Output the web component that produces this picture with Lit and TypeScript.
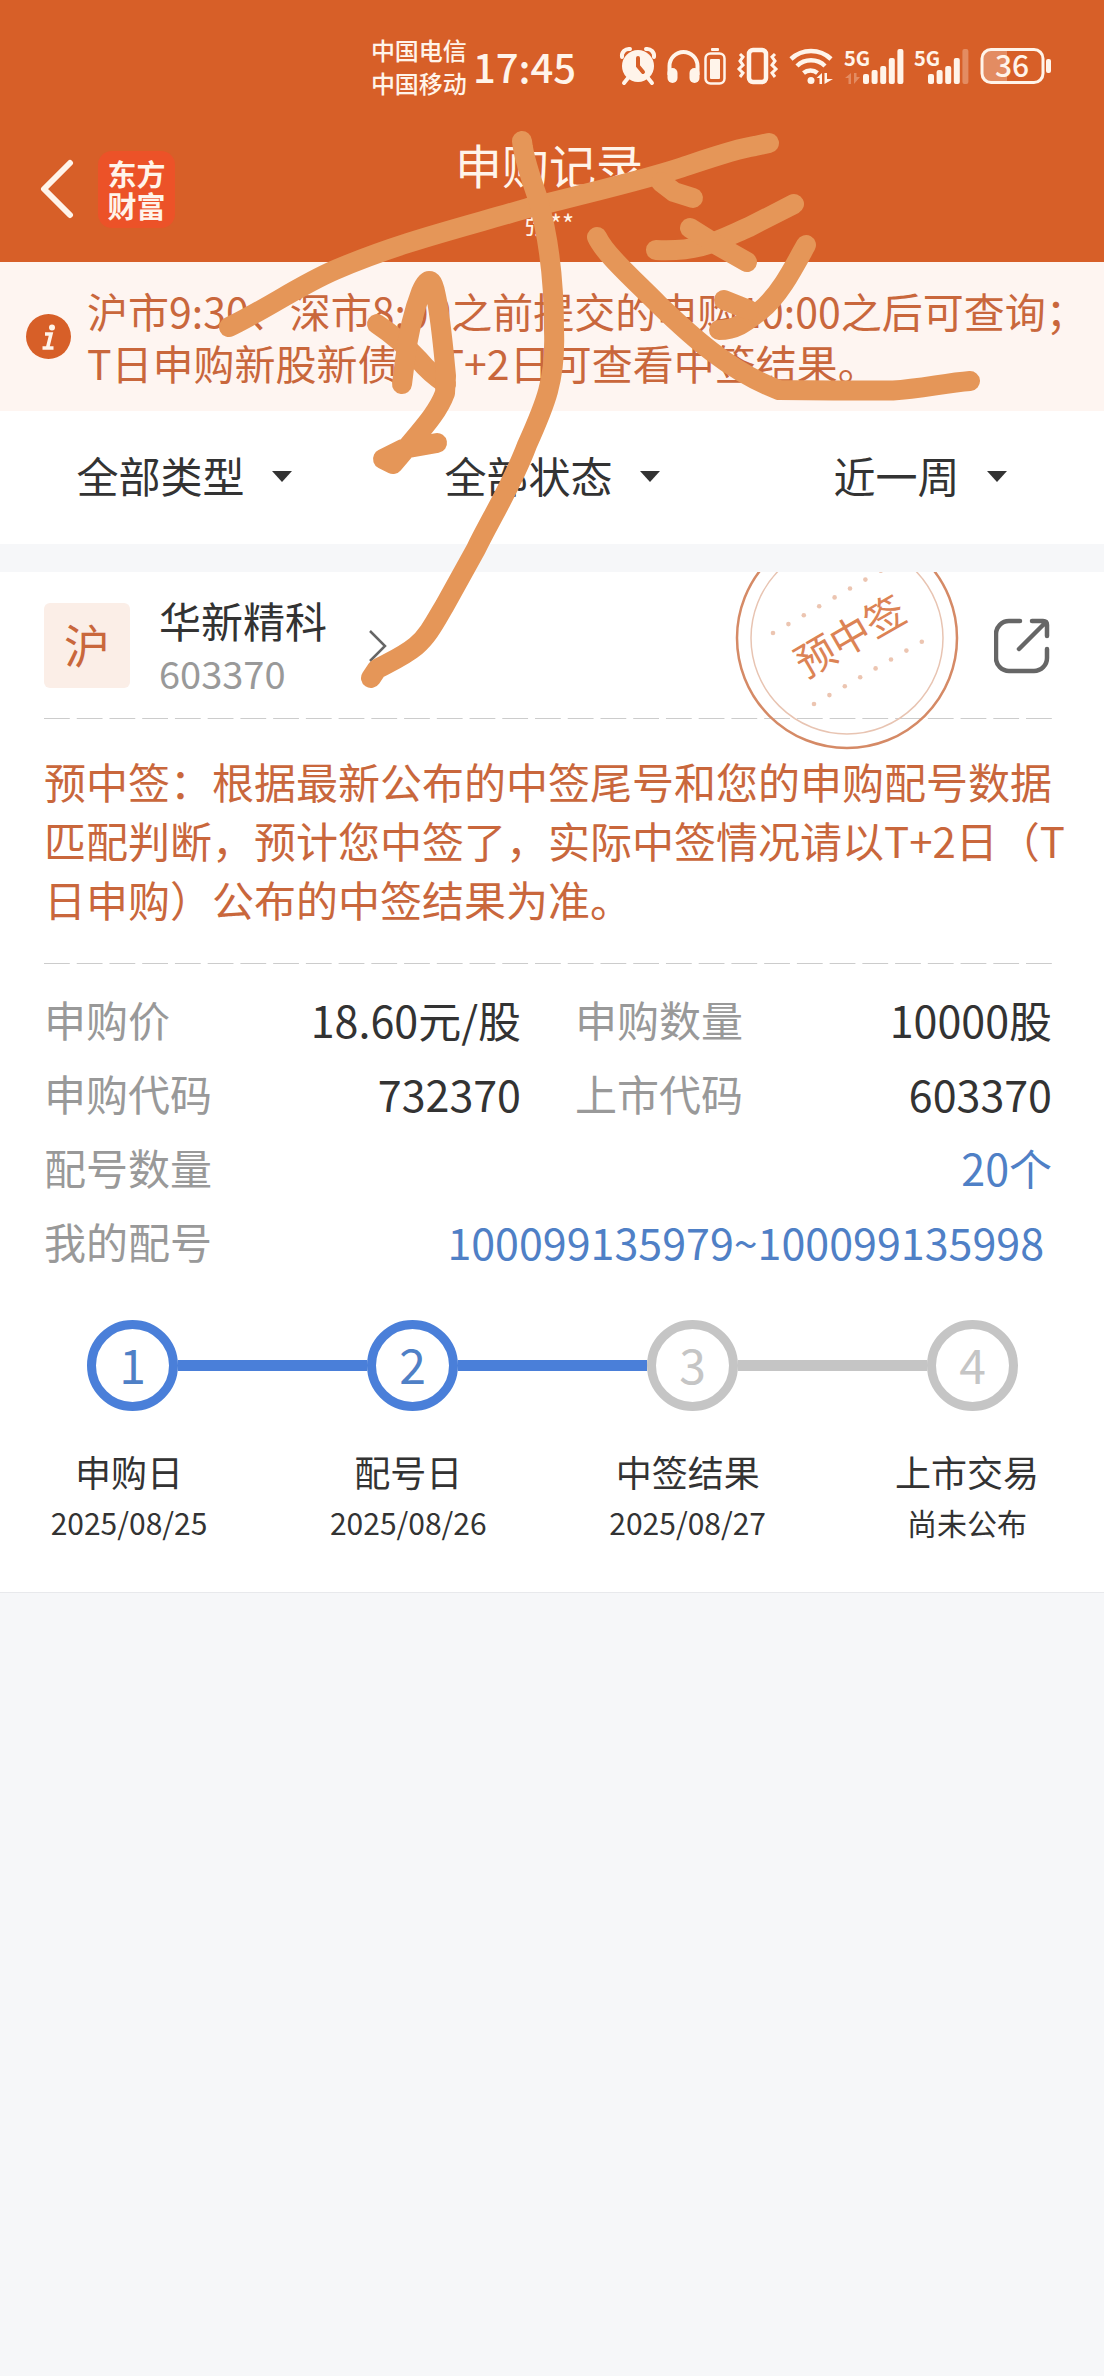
import { LitElement, html, css, svg } from "lit";
import { customElement, property } from "lit/decorators.js";
import { classMap } from "lit/directives/class-map.js";

interface Step {
  label: string;
  date: string;
  done: boolean;
}

interface Field {
  label: string;
  value: string;
  link?: boolean;
  wide?: boolean;
  inset?: boolean;
}

@customElement("status-bar")
export class StatusBar extends LitElement {
  static styles = css`
    :host {
      display: flex;
      align-items: center;
      justify-content: flex-end;
      padding: 33px 52px 0 0;
      color: #fff4ea;
      font-weight: 500;
    }
    .carriers {
      display: grid;
      font-size: 24px;
      line-height: 33px;
    }
    .time {
      margin: 0 44px 0 6px;
      font-size: 40px;
      line-height: 66px;
    }
    .icons {
      display: flex;
      gap: 11px;
      align-items: center;
    }
    .icons svg {
      display: block;
      height: 40px;
      overflow: visible;
      fill: currentColor;
    }
    .pair {
      display: flex;
      gap: 4px;
    }
    .net {
      font-size: 20px;
      font-weight: 700;
    }
    .level {
      font-size: 30px;
      font-weight: 500;
    }
    .faint {
      opacity: 0.3;
    }
  `;

  private bars(heights: number[], start: number, weak: number) {
    return heights.map(
      (h, i) => svg`<rect class=${i >= weak ? "faint" : ""} x=${start + i * 8.6} y=${38 - h} width="6" height=${h} rx="2"/>`,
    );
  }

  render() {
    return html`
      <div class="carriers"><span>中国电信</span><span>中国移动</span></div>
      <div class="time">17:45</div>
      <div class="icons">
        <svg width="36" viewBox="0 0 36 40" aria-hidden="true">
          <circle cx="18" cy="20" r="16" />
          <path d="M2 11a7 7 0 0 1 8-8M34 11a7 7 0 0 0-8-8" fill="none" stroke="currentColor" stroke-width="4" stroke-linecap="round" />
          <path d="M8 32l-4 5M28 32l4 5" stroke="currentColor" stroke-width="4" stroke-linecap="round" />
          <path d="M18 12v8l5 6" fill="none" stroke="#d75f28" stroke-width="4" stroke-linecap="round" />
        </svg>
        <div class="pair">
          <svg width="33" viewBox="0 0 33 40" aria-hidden="true">
            <path d="M2.500 29V20a14 14 0 0 1 28 0v9" fill="none" stroke="currentColor" stroke-width="4" />
            <rect x="0.500" y="22" width="10" height="15" rx="5" />
            <rect x="22.500" y="22" width="10" height="15" rx="5" />
          </svg>
          <svg width="22" viewBox="0 0 22 40" aria-hidden="true">
            <rect x="7" y="2" width="8" height="3" rx="1" />
            <rect x="1.500" y="7.500" width="19" height="30" rx="5" fill="none" stroke="currentColor" stroke-width="2.500" />
            <rect x="6" y="13" width="10" height="20" rx="1" />
          </svg>
        </div>
        <svg width="41" viewBox="0 0 41 40" aria-hidden="true">
          <rect x="12" y="4" width="17" height="32" rx="4" fill="none" stroke="currentColor" stroke-width="4.500" />
          <path d="M3 10l3 3-3 4 3 4-4 4 4 4-3 4M38 10l-3 3 3 4-3 4 4 4-4 4 3 4" transform="translate(0 -2)" fill="none" stroke="currentColor" stroke-width="3" />
        </svg>
        <svg width="45" viewBox="0 0 45 40" aria-hidden="true">
          <path d="M2 13a29 29 0 0 1 40 0M8 20a20 20 0 0 1 28 0M14.500 27a11 11 0 0 1 14 0" fill="none" stroke="currentColor" stroke-width="4.500" />
          <circle cx="22" cy="34.500" r="3.500" />
          <path d="M33 27v11h-2.500v-6h-3zM35.500 38V27h2.500v6h6z" />
        </svg>
        <svg width="59" viewBox="0 0 59 40" aria-hidden="true">
          <text class="net" x="-1" y="20">5G</text>
          <path class="faint" d="M6 27v11H3.500v-6H0zM9 38V27h2.500v4H15z" />
          ${this.bars([10, 14, 18, 26, 35], 18, 5)}
        </svg>
        <svg width="54" viewBox="0 0 54 40" aria-hidden="true">
          <text class="net" x="-1" y="20">5G</text>
          ${this.bars([10, 14, 18, 26, 35], 13, 4)}
        </svg>
        <svg width="72" viewBox="0 0 72 40" role="img" aria-label="36">
          <path class="faint" d="M10 4h17v32H10a7 7 0 0 1-7-7V11a7 7 0 0 1 7-7z" />
          <rect x="2" y="3.500" width="61" height="33" rx="9" fill="none" stroke="currentColor" stroke-width="3" />
          <rect x="66" y="13" width="5" height="14" rx="2" />
          <text class="level" x="32" y="31" text-anchor="middle">36</text>
        </svg>
      </div>
    `;
  }
}

@customElement("page-header")
export class PageHeader extends LitElement {
  static styles = css`
    :host {
      display: grid;
      grid-template-columns: 1fr auto 1fr;
      align-items: center;
      padding: 31px 44px 14px 38px;
      color: #fff4ea;
    }
    .start {
      display: flex;
      align-items: center;
      gap: 22px;
    }
    .back {
      padding: 0;
      border: 0;
      background: none;
      color: inherit;
    }
    .back svg {
      display: block;
    }
    .logo {
      display: grid;
      place-content: center;
      width: 77px;
      height: 77px;
      border-radius: 14px;
      background: #ec5228;
      font-size: 29px;
      font-weight: 700;
      line-height: 32px;
      text-align: center;
    }
    .heading {
      text-align: center;
    }
    .title {
      margin: 0;
      font-size: 47px;
      font-weight: 400;
      line-height: 68px;
    }
    .user {
      margin: 0;
      font-size: 26px;
      line-height: 50px;
    }
  `;

  render() {
    return html`
      <div class="start">
        <button class="back" aria-label="返回">
          <svg width="38" height="60" viewBox="0 0 38 60" fill="none" stroke="currentColor" stroke-width="6" stroke-linecap="round" stroke-linejoin="round">
            <path d="M32 4L6 30l26 26" />
          </svg>
        </button>
        <div class="logo"><span>东方</span><span>财富</span></div>
      </div>
      <div class="heading">
        <h1 class="title">申购记录</h1>
        <p class="user">张**</p>
      </div>
    `;
  }
}

@customElement("progress-steps")
export class ProgressSteps extends LitElement {
  @property({ attribute: false }) steps: Step[] = [];

  static styles = css`
    :host {
      display: block;
      color: #333;
    }
    .track {
      display: flex;
      align-items: center;
      padding: 0 34px 0 43px;
    }
    .dot {
      box-sizing: border-box;
      flex: none;
      display: grid;
      place-content: center;
      width: 91px;
      height: 91px;
      padding-bottom: 4px;
      border: 9px solid #c5c5c5;
      border-radius: 50%;
      color: #c5c5c5;
      font-size: 48px;
      line-height: 69px;
    }
    .link {
      flex: 1;
      height: 11px;
      background: #c5c5c5;
    }
    .dot.done {
      border-color: #4a7fd9;
      color: #4f80c6;
    }
    .link.done {
      background: #4a7fd9;
    }
    .names {
      display: flex;
      justify-content: space-between;
      margin: 34px 0 0;
      padding: 0;
      list-style: none;
      text-align: center;
    }
    .name {
      width: 170px;
    }
    .label {
      display: block;
      font-size: 36px;
      line-height: 52px;
    }
    .date {
      display: block;
      font-size: 30px;
      line-height: 50px;
    }
  `;

  render() {
    return html`
      <div class="track">
        ${this.steps.map(
          (s, i) => html`
            ${i > 0 ? html`<span class=${classMap({ link: true, done: this.steps[i - 1].done })}></span>` : ""}
            <span class=${classMap({ dot: true, done: s.done })}>${i + 1}</span>
          `,
        )}
      </div>
      <ol class="names">
        ${this.steps.map(
          (s) => html`<li class="name"><span class="label">${s.label}</span><span class="date">${s.date}</span></li>`,
        )}
      </ol>
    `;
  }
}

@customElement("record-card")
export class RecordCard extends LitElement {
  private fields: Field[] = [
    { label: "申购价", value: "18.60元/股" },
    { label: "申购数量", value: "10000股" },
    { label: "申购代码", value: "732370" },
    { label: "上市代码", value: "603370" },
    { label: "配号数量", value: "20个", link: true, wide: true },
    { label: "我的配号", value: "100099135979~100099135998", link: true, wide: true, inset: true },
  ];

  private steps: Step[] = [
    { label: "申购日", date: "2025/08/25", done: true },
    { label: "配号日", date: "2025/08/26", done: true },
    { label: "中签结果", date: "2025/08/27", done: false },
    { label: "上市交易", date: "尚未公布", done: false },
  ];

  static styles = css`
    :host {
      position: relative;
      display: block;
      padding: 31px 52px 45px 44px;
      border-bottom: 1px solid #e8e9ec;
      background: #fff;
      color: #333;
      overflow: hidden;
    }
    .top {
      display: flex;
      align-items: center;
      padding-bottom: 30px;
    }
    .market {
      width: 86px;
      padding-bottom: 4px;
      border-radius: 6px;
      background: #fbeee7;
      color: #c9673c;
      font-size: 46px;
      line-height: 81px;
      text-align: center;
    }
    .stock {
      display: flex;
      align-items: center;
      gap: 41px;
      margin-left: 29px;
      color: inherit;
      text-decoration: none;
    }
    .stock-name {
      display: block;
      margin-top: -12px;
      font-size: 42px;
      line-height: 54px;
    }
    .code {
      display: block;
      padding-top: 6px;
      margin-bottom: -6px;
      color: #999;
      font-size: 38px;
      line-height: 39px;
    }
    .share {
      margin-left: auto;
      padding: 0;
      border: 0;
      background: none;
    }
    .share svg,
    .stock svg {
      display: block;
    }
    .rule {
      height: 1px;
      margin: 0;
      border: 0;
      background: linear-gradient(90deg, #ccc 26px, transparent 26px) 0 0 / calc((100% + 7px) / 31) 1px;
    }
    .message {
      margin: 32px -22px 35px 0;
      color: #c9673c;
      font-size: 42px;
      line-height: 59px;
    }
    .fields {
      display: grid;
      grid-template-columns: 1fr 1fr;
      column-gap: 54px;
      margin: 18px 0 42px;
      line-height: 74px;
    }
    .field {
      display: flex;
      justify-content: space-between;
    }
    .wide {
      grid-column: 1 / -1;
    }
    .inset {
      padding-right: 8px;
    }
    .key {
      color: #999;
      font-size: 42px;
    }
    .value {
      margin: 0;
      font-size: 43px;
    }
    .value-link {
      color: #4f80c6;
      text-decoration: none;
    }
    .stamp {
      position: absolute;
      top: -46px;
      right: 145px;
      fill: none;
      pointer-events: none;
    }
    .stamp-text {
      fill: #dc8355;
      font-size: 40px;
    }
  `;

  private dots(x: number, y: number) {
    return Array.from(
      { length: 8 },
      (_, i) => svg`<circle cx=${x + i * 15.4} cy=${y - i * 8.9} r="2.3" fill="#ecc5b1"/>`,
    );
  }

  render() {
    return html`
      <div class="top">
        <span class="market">沪</span>
        <a class="stock" href="#603370">
          <span><span class="stock-name">华新精科</span><span class="code">603370</span></span>
          <svg width="20" height="34" viewBox="0 0 20 34" fill="none" stroke="#666" stroke-width="2.500"><path d="M2 2l15 15L2 32" /></svg>
        </a>
        <button class="share" aria-label="分享">
          <svg width="58" height="58" viewBox="0 0 58 58" fill="none" stroke="#666" stroke-width="4.500" stroke-linecap="round" stroke-linejoin="round">
            <path d="M26 4H15A13 13 0 0 0 2 17V41A13 13 0 0 0 15 54H40A13 13 0 0 0 53 41V32" />
            <path d="M38 4H49Q53 4 53 8V19M52 5L25 32" />
          </svg>
        </button>
      </div>
      <hr class="rule" />
      <p class="message">预中签：根据最新公布的中签尾号和您的申购配号数据匹配判断，预计您中签了，实际中签情况请以T+2日（T日申购）公布的中签结果为准。</p>
      <hr class="rule" />
      <dl class="fields">
        ${this.fields.map(
          (f) => html`
            <div class=${classMap({ field: true, wide: !!f.wide, inset: !!f.inset })}>
              <dt class="key">${f.label}</dt>
              <dd class="value">${f.link ? html`<a class="value-link" href="#allotment">${f.value}</a>` : f.value}</dd>
            </div>
          `,
        )}
      </dl>
      <progress-steps .steps=${this.steps}></progress-steps>
      <svg class="stamp" width="224" height="224" viewBox="0 0 224 224">
        <circle cx="112" cy="112" r="110" stroke="#d58a66" stroke-width="2.500" />
        <circle cx="112" cy="112" r="96" stroke="#e8c4b2" stroke-width="1.500" />
        ${this.dots(38, 107)} ${this.dots(79, 178)}
        <text class="stamp-text" x="115" y="125" text-anchor="middle" transform="rotate(-30 115 110)">预中签</text>
      </svg>
    `;
  }
}

@customElement("app-root")
export class AppRoot extends LitElement {
  private filters = [
    { name: "类型", value: "全部类型" },
    { name: "状态", value: "全部状态" },
    { name: "时间", value: "近一周" },
  ];

  static styles = css`
    :host {
      position: relative;
      display: block;
      min-height: 100vh;
      background: #f6f7f9;
      color: #333;
      font-family: "Noto Sans CJK SC", "Noto Sans", sans-serif;
    }
    .head {
      background: #d75f28;
    }
    .notice {
      display: flex;
      align-items: center;
      gap: 16px;
      padding: 22px 8px 23px 26px;
      background: #fef5f1;
      color: #c9673c;
      font-size: 41px;
      line-height: 52px;
    }
    .notice svg {
      flex: none;
    }
    .notice-text {
      margin: 0;
    }
    .filters {
      display: grid;
      grid-template-columns: repeat(3, 1fr);
      margin-bottom: 28px;
      background: #fff;
    }
    .filter {
      display: flex;
      align-items: center;
      justify-content: center;
      gap: 26px;
      padding: 33px 0 36px;
    }
    .select {
      appearance: none;
      height: 64px;
      padding: 0 0 2px;
      border: 0;
      background: none;
      color: inherit;
      font: inherit;
      font-size: 42px;
      line-height: 62px;
    }
    .ink {
      position: absolute;
      top: 0;
      left: 0;
      width: 100%;
      fill: none;
      stroke: #e59658;
      stroke-width: 20;
      stroke-linecap: round;
      stroke-linejoin: round;
      pointer-events: none;
    }
  `;

  render() {
    return html`
      <div class="head">
        <status-bar></status-bar>
        <page-header></page-header>
      </div>
      <section class="notice">
        <svg width="45" height="45" viewBox="0 0 45 45" aria-hidden="true">
          <circle cx="22.500" cy="22.500" r="22.500" fill="#d75f28" />
          <circle cx="26" cy="13.500" r="3" fill="#fff4ea" />
          <path d="M19 20h6l-3.500 14M16.500 34h11" fill="none" stroke="#fff4ea" stroke-width="3.500" />
        </svg>
        <p class="notice-text">沪市9:30、深市8:00之前提交的申购10:00之后可查询；<br />T日申购新股新债，T+2日可查看中签结果。</p>
      </section>
      <div class="filters">
        ${this.filters.map(
          (f) => html`
            <label class="filter">
              <select class="select" aria-label=${f.name}>
                <option>${f.value}</option>
              </select>
              <svg width="20" height="11" viewBox="0 0 20 11" fill="#333"><path d="M0 0h20L10 11z" /></svg>
            </label>
          `,
        )}
      </div>
      <record-card></record-card>
      <svg class="ink" viewBox="0 0 1104 720" aria-hidden="true">
        <path d="M229 327C270 307 300 285 335 270C400 242 460 228 528 208C580 195 640 181 680 168C710 158 735 149 755 146L769 143" />
        <path d="M522 141C524 160 531 178 537 196C550 240 554 290 554 330C556 380 545 405 527 445C512 485 490 520 476 549L445 605C435 622 428 636 416 646C404 656 390 662 377 669L371 678" />
        <path d="M377 324C392 334 405 345 419 360C428 371 437 378 446 384" />
        <path d="M402 384L405 360C408 335 414 310 421 292Q431 268 436 296C441 320 443 345 446 376L445 393C438 412 424 427 404 451L393 464L383 459L403 449L437 443" />
        <path d="M661 182L674 192L693 198" />
        <path d="M656 250C700 252 715 242 749 227L794 204" />
        <path d="M690 228L717 245L747 262" />
        <path d="M806 245C795 265 780 295 760 311C745 323 735 330 719 330" />
        <path d="M724 300L749 310" />
        <path d="M597 237C605 254 630 276 658 304C690 335 730 372 779 390L834 390.500H893C920 389 945 383 970 381" />
      </svg>
    `;
  }
}
